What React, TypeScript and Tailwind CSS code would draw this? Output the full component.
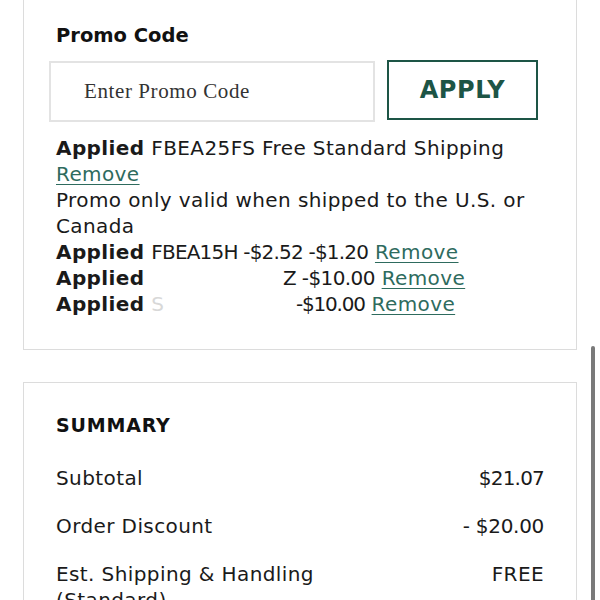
import React from "react";

const font = "font-['DejaVu_Sans','Open_Sans',sans-serif]";

const Remove = () => (
  <span className="text-[#2e6b5e] underline underline-offset-[3px] decoration-1">Remove</span>
);

export default function App() {
  return (
    <div className={`relative w-[600px] h-[600px] overflow-hidden bg-white text-[#1a1a1a] ${font}`}>
      <div className="px-[23px]">
        {/* Promo card */}
        <div className="border border-t-0 border-[#dcdcdc] px-[32px] pt-[23px] pb-[32px]">
          <div className="text-[19.5px] font-bold leading-[26px] text-[#111]">Promo Code</div>
          <div className="mt-[11px] -ml-[7px] mr-[6px] flex items-start gap-[12px]">
            <div className="mt-[1px] flex h-[61px] flex-1 items-center border-2 border-[#e3e3e3] pl-[33px]">
              <span className="font-['Liberation_Serif',serif] text-[21px] tracking-[0.6px] text-[#333]">Enter Promo Code</span>
            </div>
            <button className="flex h-[60px] w-[151px] items-center justify-center border-2 border-[#1d5546] text-[24px] font-bold tracking-[0.6px] text-[#1d5546]">
              APPLY
            </button>
          </div>
          <div className="mt-[13px] text-[20px] leading-[26px] tracking-[0.4px] text-[#1a1a1a]">
            <div className="whitespace-nowrap">
              <span className="font-bold">Applied</span> FBEA25FS Free Standard Shipping
            </div>
            <div>
              <Remove />
            </div>
            <div className="whitespace-nowrap">Promo only valid when shipped to the U.S. or</div>
            <div>Canada</div>
            <div className="whitespace-nowrap">
              <span className="font-bold">Applied</span>{" "}
              <span className="tracking-[-0.8px]">FBEA15H -$2.52 -$1.20</span> <Remove />
            </div>
            <div className="whitespace-nowrap">
              <span className="inline-block w-[227px] font-bold">Applied</span>
              <span className="tracking-[-0.6px]">Z -$10.00</span> <Remove />
            </div>
            <div className="whitespace-nowrap">
              <span className="inline-block w-[240px]">
                <span className="font-bold">Applied</span> <span className="text-[#d8d8d8]">S</span>
              </span>
              <span className="tracking-[-1.2px]">-$10.00</span> <Remove />
            </div>
          </div>
        </div>

        {/* Summary card */}
        <div className="mt-[32px] border border-[#dcdcdc] px-[32px] pt-[29px]">
          <div className="text-[19px] font-bold leading-[26px] tracking-[0.8px] text-[#111]">SUMMARY</div>
          <div className="mt-[27px] flex flex-col gap-[22px] text-[20px] leading-[26px] tracking-[0.4px] text-[#1a1a1a]">
            <div className="flex justify-between">
              <span>Subtotal</span>
              <span className="tracking-[-0.8px]">$21.07</span>
            </div>
            <div className="flex justify-between">
              <span>Order Discount</span>
              <span className="tracking-[-0.3px]">- $20.00</span>
            </div>
            <div className="flex justify-between">
              <span>
                Est. Shipping &amp; Handling
                <br />
                (Standard)
              </span>
              <span>FREE</span>
            </div>
          </div>
        </div>
      </div>

      {/* scrollbar */}
      <div className="absolute left-[591px] top-[346px] h-[260px] w-[4px] rounded-full bg-[#7a7a7a]" />
    </div>
  );
}
